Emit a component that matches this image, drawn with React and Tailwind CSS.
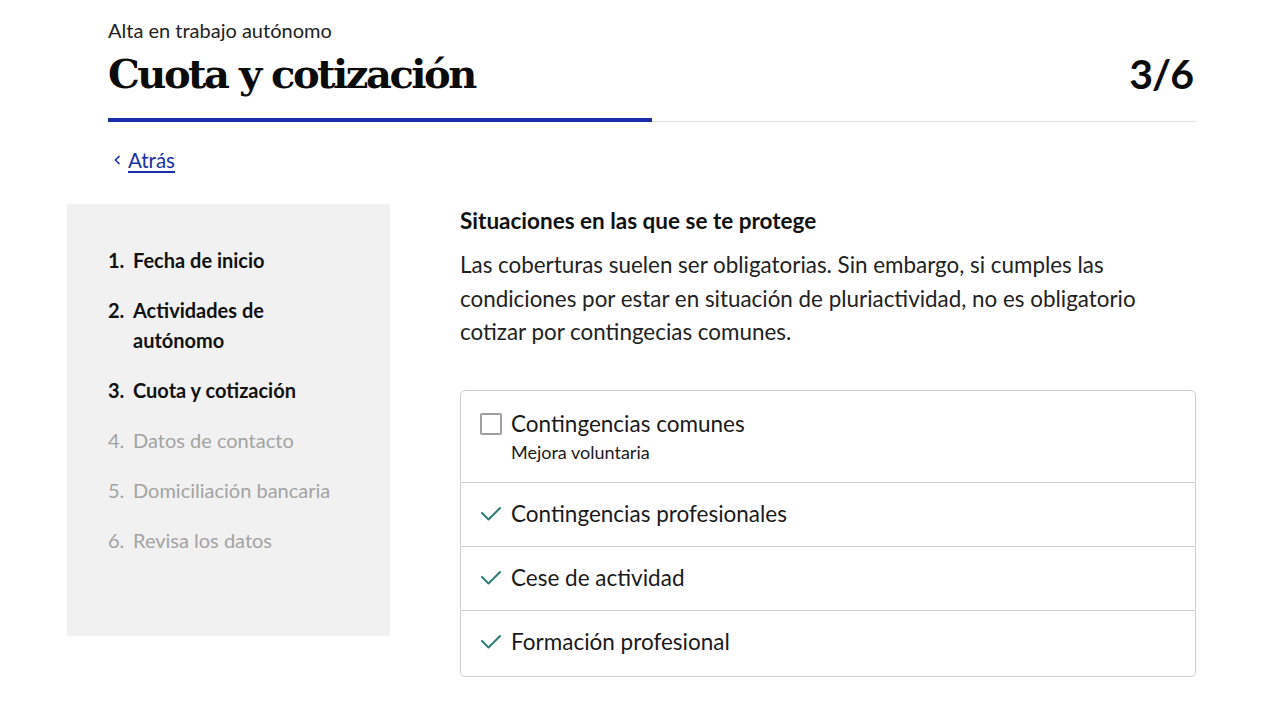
import React from "react";

const steps = [
  { n: "1.", t: "Fecha de inicio", done: true },
  { n: "2.", t: "Actividades de autónomo", done: true },
  { n: "3.", t: "Cuota y cotización", done: true },
  { n: "4.", t: "Datos de contacto", done: false },
  { n: "5.", t: "Domiciliación bancaria", done: false },
  { n: "6.", t: "Revisa los datos", done: false },
];

function Check() {
  return (
    <svg width="24" height="24" viewBox="0 0 24 24" fill="none" stroke="#2e7d75" strokeWidth="2" strokeLinecap="round" strokeLinejoin="round" className="shrink-0">
      <path d="M21 6 9.5 17.5 3 11" />
    </svg>
  );
}

export default function App() {
  return (
    <div className="min-h-[718px] bg-white text-[#1a1a1a]" style={{ fontFamily: "Lato, 'Noto Sans', sans-serif" }}>
      <header className="ml-[108px] w-[1088px] pt-[18px]">
        <div className="text-[20px] leading-[24px] text-[#222]">Alta en trabajo autónomo</div>
        <div className="flex items-end justify-between mt-[7px]">
          <h1 className="text-[40px] leading-[50px] font-bold text-[#0b0b0b] tracking-[-2.5px]" style={{ fontFamily: "'DejaVu Serif', serif" }}>
            Cuota y cotización
          </h1>
          <div className="text-[41px] leading-[50px] font-bold text-[#0b0b0b] pr-[3px] tracking-[-1px]">3/6</div>
        </div>
        <div className="relative mt-[19px] h-[5px]">
          <div className="absolute left-0 right-0 bottom-[1px] h-px bg-[#e3e3e3]" />
          <div className="absolute left-0 top-0 h-[4px] w-1/2 bg-[#1a2fa6]" />
        </div>
        <a href="#" className="mt-[24px] inline-flex items-center gap-[7px] pl-[6px] text-[20.5px] leading-[26px] text-[#1a2fa6]">
          <svg width="7" height="10" viewBox="0 0 7 10" fill="none" stroke="#1a2fa6" strokeWidth="1.6"><path d="M5.5 1 1.5 5l4 4" /></svg>
          <span className="underline underline-offset-[3px]">Atrás</span>
        </a>
      </header>

      <div className="flex mt-[31px] ml-[67px]">
        <nav className="w-[323px] h-[432px] bg-[#f1f1f1] pl-[41px] pr-[20px] pt-[41px] shrink-0">
          <ol className="flex flex-col gap-[20px]">
            {steps.map((s) => (
              <li key={s.n} className={`flex text-[20px] leading-[30px] ${s.done ? "font-bold text-[#111]" : "text-[#a3a3a3]"}`}>
                <span className="w-[25px] shrink-0">{s.n}</span>
                <span className={s.n === "2." ? "w-[150px]" : ""}>{s.t}</span>
              </li>
            ))}
          </ol>
        </nav>

        <main className="ml-[70px] w-[736px] pt-[2px]">
          <h2 className="text-[22.5px] leading-[30px] font-bold text-[#111]">Situaciones en las que se te protege</h2>
          <p className="mt-[12px] text-[22.4px] leading-[33.5px] text-[#222]">
            Las coberturas suelen ser obligatorias. Sin embargo, si cumples las condiciones por estar en situación de pluriactividad, no es obligatorio cotizar por contingecias comunes.
          </p>

          <div className="mt-[41px] border border-[#cfcfcf] rounded-[5px]">
            <div className="flex gap-[9px] px-[19px] pt-[18px] pb-[17px] border-b border-[#cfcfcf]">
              <div className="mt-[4px] w-[22px] h-[22px] border-2 border-[#a0a0a0] rounded-[2px] shrink-0" />
              <div>
                <div className="text-[22.5px] leading-[30px] text-[#1a1a1a]">Contingencias comunes</div>
                <div className="text-[18px] leading-[26px] text-[#1a1a1a]">Mejora voluntaria</div>
              </div>
            </div>
            {["Contingencias profesionales", "Cese de actividad", "Formación profesional"].map((t, i) => (
              <div key={t} className={`flex items-center gap-[8px] px-[18px] pt-[16px] ${i < 2 ? "pb-[17px] border-b border-[#cfcfcf]" : "pb-[19px]"}`}>
                <Check />
                <div className="text-[22.5px] leading-[30px] text-[#1a1a1a]">{t}</div>
              </div>
            ))}
          </div>
        </main>
      </div>
    </div>
  );
}
